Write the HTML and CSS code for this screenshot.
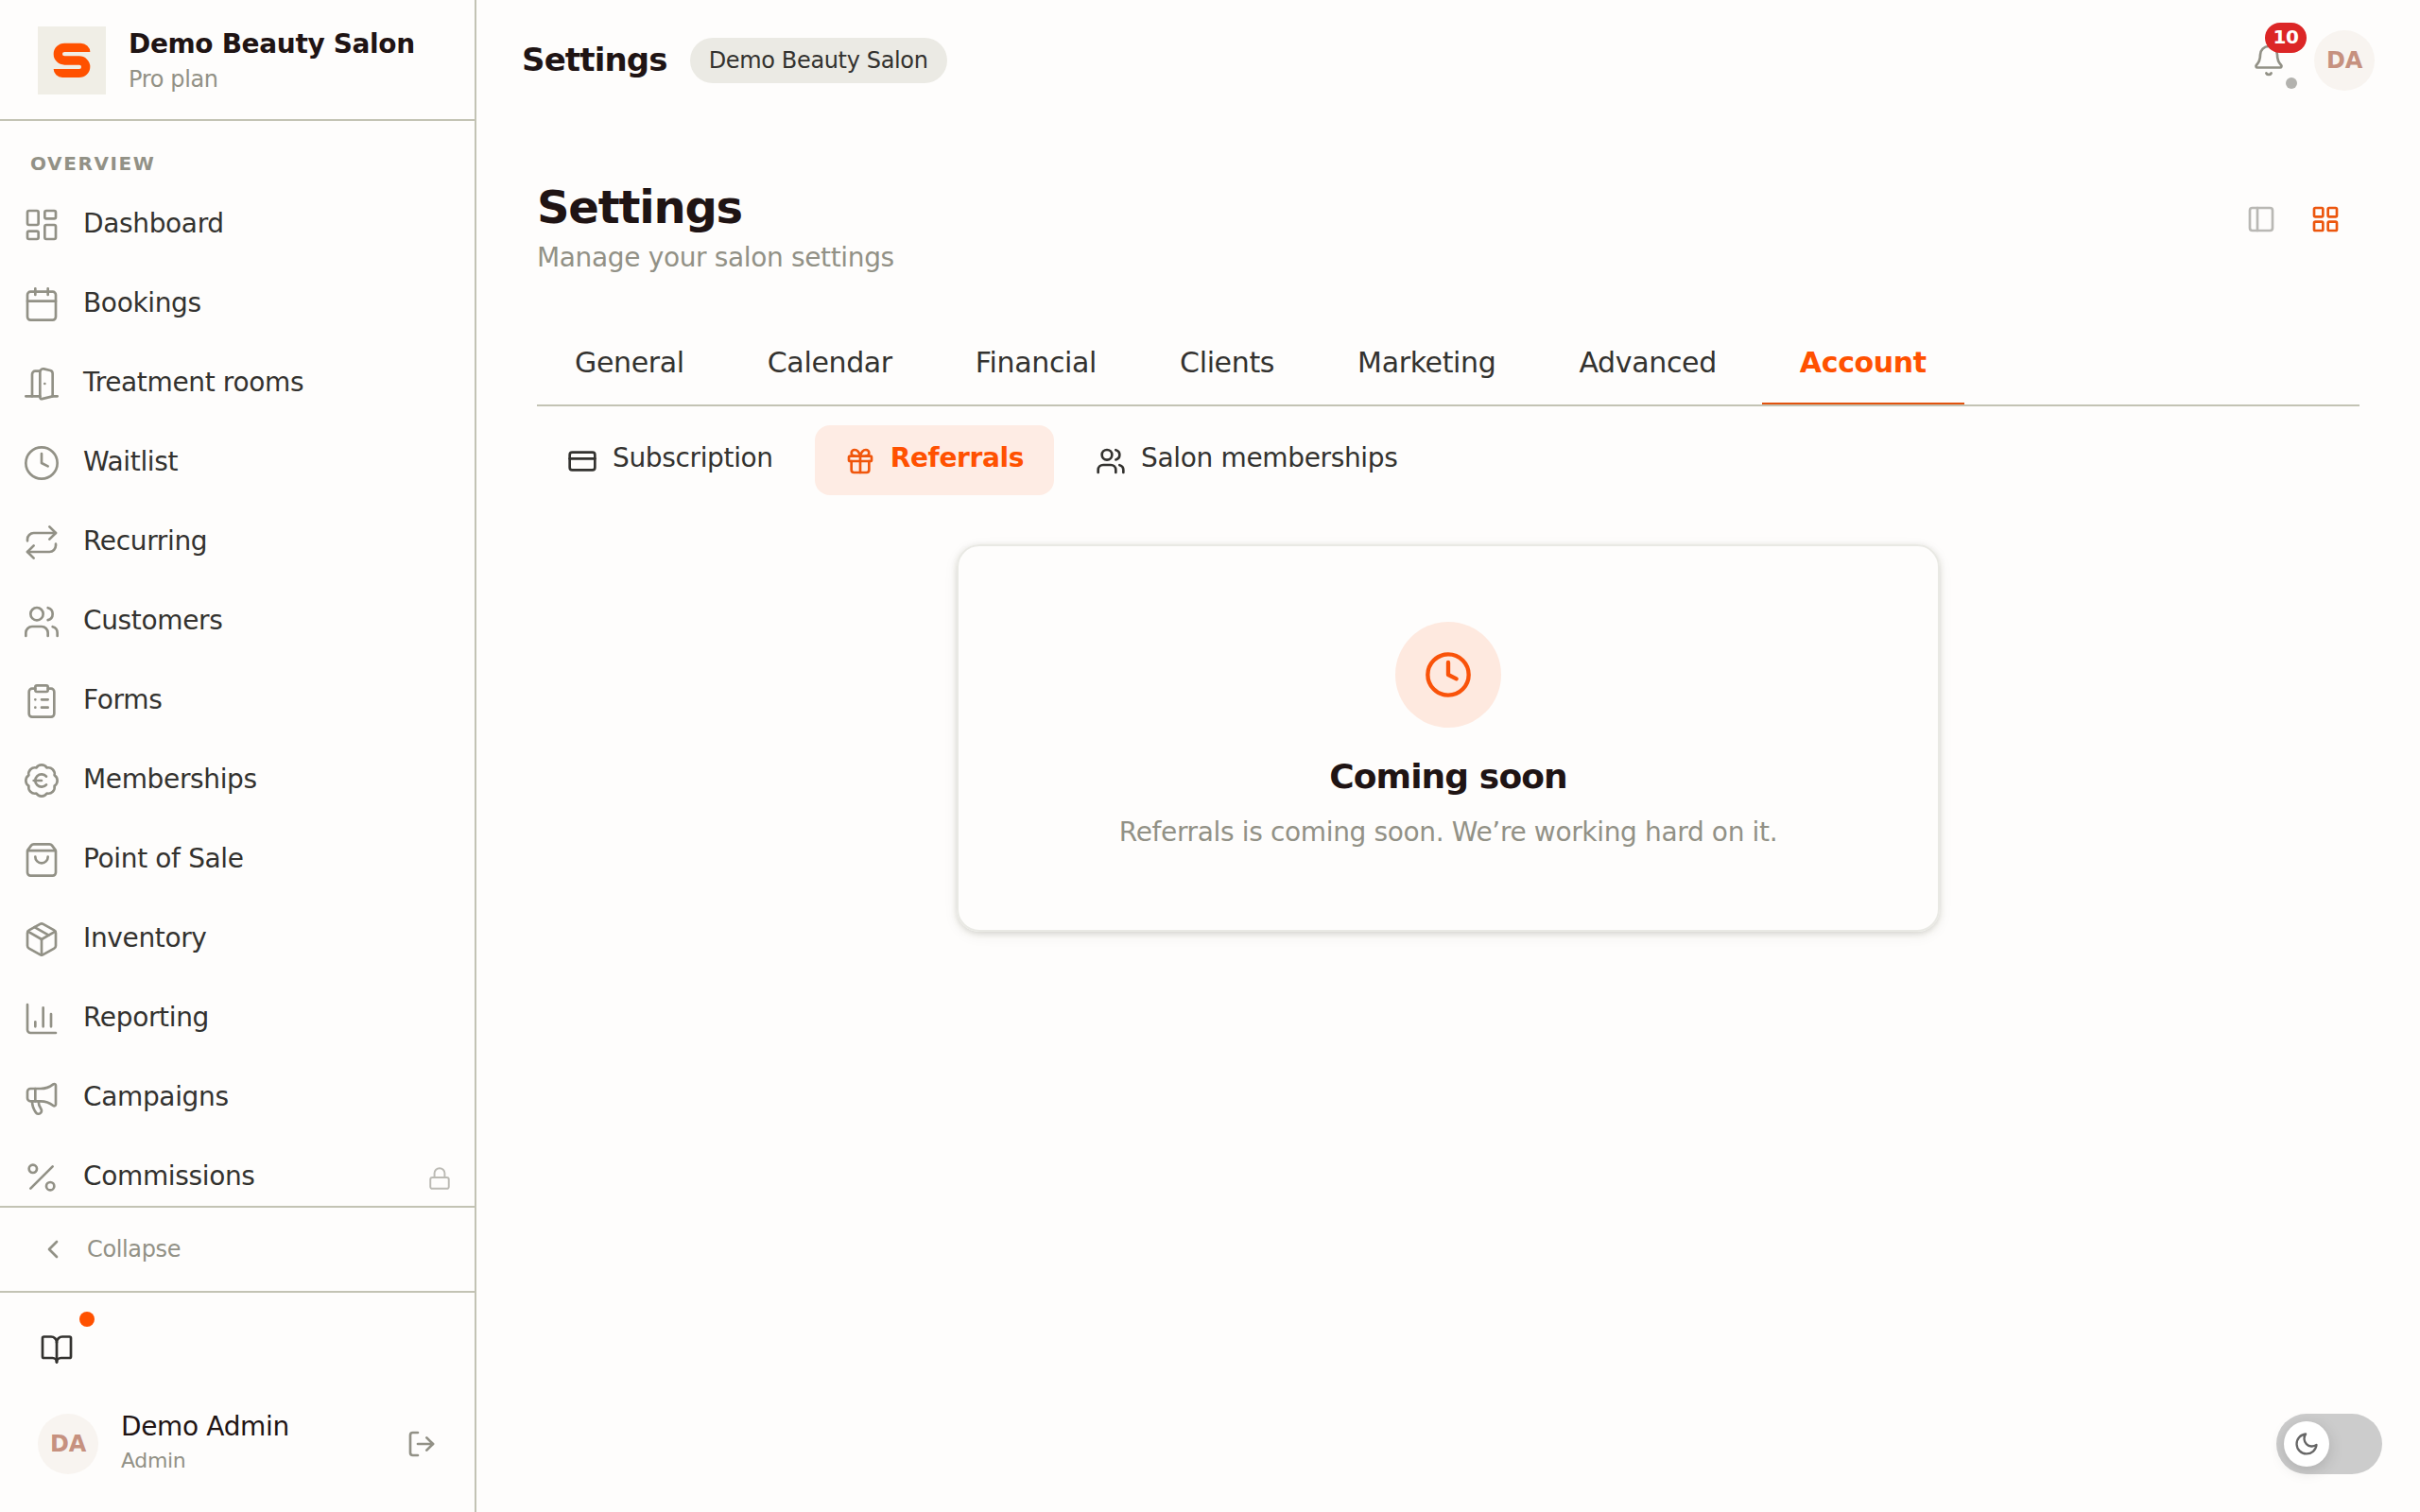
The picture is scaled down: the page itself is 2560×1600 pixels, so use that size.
FILE: index.html
```html
<!DOCTYPE html>
<html lang="en">
<head>
  <meta charset="UTF-8">
  <meta name="viewport" content="width=device-width, initial-scale=1.0">
  <title>Settings - Demo Beauty Salon</title>
  <link rel="stylesheet" href="styles.css">
</head>
<body>
  <aside class="sidebar">
    <div class="brand">
      <svg class="brand-logo" viewBox="0 0 216 216">
        <path d="M166 81A30 28 0 0 0 136 53H85A35 34.500 0 0 0 50 88A35 34 0 0 0 85 122H132Q138 122 138 128V129Q138 135 132 135H50A29 27 0 0 0 78 162H131A35 34 0 0 0 166 128A35 34 0 0 0 131 94H85Q78 94 78 88V87Q78 81 85 81Z"/>
      </svg>
      <div class="brand-text">
        <div class="brand-name">Demo Beauty Salon</div>
        <div class="brand-plan">Pro plan</div>
      </div>
    </div>

    <nav class="nav">
      <div class="nav-label">OVERVIEW</div>
      <a class="nav-item">
        <svg class="icon" viewBox="0 0 24 24"><rect x="3" y="3" width="7" height="9" rx="1"/><rect x="14" y="3" width="7" height="5" rx="1"/><rect x="14" y="12" width="7" height="9" rx="1"/><rect x="3" y="16" width="7" height="5" rx="1"/></svg>
        <span>Dashboard</span>
      </a>
      <a class="nav-item">
        <svg class="icon" viewBox="0 0 24 24"><path d="M8 2v4M16 2v4M3 10h18"/><rect x="3" y="4" width="18" height="18" rx="2"/></svg>
        <span>Bookings</span>
      </a>
      <a class="nav-item">
        <svg class="icon" viewBox="0 0 24 24"><path d="M11 20H2"/><path d="M11 4.562v16.157a1 1 0 0 0 1.242.97L19 20V5.562a2 2 0 0 0-1.515-1.940l-4-1A2 2 0 0 0 11 4.561z"/><path d="M11 4H8a2 2 0 0 0-2 2v14"/><path d="M14 12h.01"/><path d="M22 20h-3"/></svg>
        <span>Treatment rooms</span>
      </a>
      <a class="nav-item">
        <svg class="icon" viewBox="0 0 24 24"><circle cx="12" cy="12" r="10"/><path d="M12 6v6l4 2"/></svg>
        <span>Waitlist</span>
      </a>
      <a class="nav-item">
        <svg class="icon" viewBox="0 0 24 24"><path d="m17 2 4 4-4 4"/><path d="M3 11v-1a4 4 0 0 1 4-4h14"/><path d="m7 22-4-4 4-4"/><path d="M21 13v1a4 4 0 0 1-4 4H3"/></svg>
        <span>Recurring</span>
      </a>
      <a class="nav-item">
        <svg class="icon" viewBox="0 0 24 24"><path d="M16 21v-2a4 4 0 0 0-4-4H6a4 4 0 0 0-4 4v2"/><circle cx="9" cy="7" r="4"/><path d="M22 21v-2a4 4 0 0 0-3-3.870"/><path d="M16 3.130a4 4 0 0 1 0 7.750"/></svg>
        <span>Customers</span>
      </a>
      <a class="nav-item">
        <svg class="icon" viewBox="0 0 24 24"><rect x="8" y="2" width="8" height="4" rx="1"/><path d="M16 4h2a2 2 0 0 1 2 2v14a2 2 0 0 1-2 2H6a2 2 0 0 1-2-2V6a2 2 0 0 1 2-2h2"/><path d="M12 11h4M12 16h4M8 11h.01M8 16h.01"/></svg>
        <span>Forms</span>
      </a>
      <a class="nav-item">
        <svg class="icon" viewBox="0 0 24 24"><path d="M3.850 8.620a4 4 0 0 1 4.780-4.770 4 4 0 0 1 6.740 0 4 4 0 0 1 4.780 4.780 4 4 0 0 1 0 6.740 4 4 0 0 1-4.770 4.780 4 4 0 0 1-6.750 0 4 4 0 0 1-4.780-4.770 4 4 0 0 1 0-6.760Z"/><path d="M7 12h5"/><path d="M15 9.400a4 4 0 1 0 0 5.200"/></svg>
        <span>Memberships</span>
      </a>
      <a class="nav-item">
        <svg class="icon" viewBox="0 0 24 24"><path d="M16 10a4 4 0 0 1-8 0"/><path d="M3.103 6.034h17.794"/><path d="M3.400 5.467a2 2 0 0 0-.4 1.200V20a2 2 0 0 0 2 2h14a2 2 0 0 0 2-2V6.667a2 2 0 0 0-.4-1.200l-2-2.667A2 2 0 0 0 17 2H7a2 2 0 0 0-1.600.8z"/></svg>
        <span>Point of Sale</span>
      </a>
      <a class="nav-item">
        <svg class="icon" viewBox="0 0 24 24"><path d="M11 21.730a2 2 0 0 0 2 0l7-4A2 2 0 0 0 21 16V8a2 2 0 0 0-1-1.730l-7-4a2 2 0 0 0-2 0l-7 4A2 2 0 0 0 3 8v8a2 2 0 0 0 1 1.730z"/><path d="M12 22V12"/><path d="m3.300 7 8.700 5 8.700-5"/><path d="m7.500 4.270 9 5.150"/></svg>
        <span>Inventory</span>
      </a>
      <a class="nav-item">
        <svg class="icon" viewBox="0 0 24 24"><path d="M3 3v16a2 2 0 0 0 2 2h16"/><path d="M18 17V9M13 17V5M8 17v-3"/></svg>
        <span>Reporting</span>
      </a>
      <a class="nav-item">
        <svg class="icon" viewBox="0 0 24 24"><path d="M11 6a13 13 0 0 0 8.400-2.800A1 1 0 0 1 21 4v12a1 1 0 0 1-1.600.8A13 13 0 0 0 11 14H5a2 2 0 0 1-2-2V8a2 2 0 0 1 2-2z"/><path d="M6 14a12 12 0 0 0 2.400 7.200 2 2 0 0 0 3.200-2.400A8 8 0 0 1 10 14"/><path d="M8 6v8"/></svg>
        <span>Campaigns</span>
      </a>
      <a class="nav-item">
        <svg class="icon" viewBox="0 0 24 24"><path d="M19 5 5 19"/><circle cx="6.500" cy="6.500" r="2.500"/><circle cx="17.500" cy="17.500" r="2.500"/></svg>
        <span>Commissions</span>
        <svg class="icon lock" viewBox="0 0 24 24"><rect x="3" y="11" width="18" height="11" rx="2"/><path d="M7 11V7a5 5 0 0 1 10 0v4"/></svg>
      </a>
    </nav>

    <div class="collapse">
      <svg class="icon" viewBox="0 0 24 24"><path d="m15 18-6-6 6-6"/></svg>
      <span>Collapse</span>
    </div>

    <div class="account">
      <div class="guide">
        <svg class="icon" viewBox="0 0 24 24"><path d="M12 7v14"/><path d="M3 18a1 1 0 0 1-1-1V4a1 1 0 0 1 1-1h5a4 4 0 0 1 4 4 4 4 0 0 1 4-4h5a1 1 0 0 1 1 1v13a1 1 0 0 1-1 1h-6a3 3 0 0 0-3 3 3 3 0 0 0-3-3z"/></svg>
        <span class="guide-dot"></span>
      </div>
      <div class="user">
        <div class="avatar">DA</div>
        <div class="user-text">
          <div class="user-name">Demo Admin</div>
          <div class="user-role">Admin</div>
        </div>
        <svg class="icon logout" viewBox="0 0 24 24"><path d="M9 21H5a2 2 0 0 1-2-2V5a2 2 0 0 1 2-2h4"/><path d="m16 17 5-5-5-5"/><path d="M21 12H9"/></svg>
      </div>
    </div>
  </aside>

  <main class="main">
    <header class="topbar">
      <div class="topbar-title">Settings</div>
      <div class="salon-pill">Demo Beauty Salon</div>
      <div class="topbar-actions">
        <div class="bell">
          <svg class="icon" viewBox="0 0 24 24"><path d="M10.268 21a2 2 0 0 0 3.464 0"/><path d="M3.262 15.326A1 1 0 0 0 4 17h16a1 1 0 0 0 .740-1.673C19.410 13.956 18 12.499 18 8A6 6 0 0 0 6 8c0 4.499-1.411 5.956-2.738 7.326"/></svg>
          <span class="bell-count">10</span>
          <span class="bell-dot"></span>
        </div>
        <div class="avatar">DA</div>
      </div>
    </header>

    <section class="content">
      <div class="page-head">
        <div>
          <h1>Settings</h1>
          <p class="subtitle">Manage your salon settings</p>
        </div>
        <div class="view-switch">
          <button class="view-btn"><svg class="icon" viewBox="0 0 24 24"><rect x="3" y="3" width="18" height="18" rx="2"/><path d="M9 3v18"/></svg></button>
          <button class="view-btn active"><svg class="icon" viewBox="0 0 24 24"><rect x="3" y="3" width="7" height="7" rx="1"/><rect x="14" y="3" width="7" height="7" rx="1"/><rect x="14" y="14" width="7" height="7" rx="1"/><rect x="3" y="14" width="7" height="7" rx="1"/></svg></button>
        </div>
      </div>

      <div class="tabs">
        <a class="tab">General</a>
        <a class="tab">Calendar</a>
        <a class="tab">Financial</a>
        <a class="tab">Clients</a>
        <a class="tab">Marketing</a>
        <a class="tab">Advanced</a>
        <a class="tab active">Account</a>
      </div>

      <div class="subtabs">
        <a class="subtab">
          <svg class="icon" viewBox="0 0 24 24"><rect x="2" y="5" width="20" height="14" rx="2"/><path d="M2 10h20"/></svg>
          <span>Subscription</span>
        </a>
        <a class="subtab active">
          <svg class="icon" viewBox="0 0 24 24"><rect x="3" y="8" width="18" height="4" rx="1"/><path d="M12 8v13"/><path d="M19 12v7a2 2 0 0 1-2 2H7a2 2 0 0 1-2-2v-7"/><path d="M7.500 8a2.500 2.500 0 0 1 0-5A4.800 8 0 0 1 12 8a4.800 8 0 0 1 4.500-5 2.500 2.500 0 0 1 0 5"/></svg>
          <span>Referrals</span>
        </a>
        <a class="subtab">
          <svg class="icon" viewBox="0 0 24 24"><path d="M16 21v-2a4 4 0 0 0-4-4H6a4 4 0 0 0-4 4v2"/><circle cx="9" cy="7" r="4"/><path d="M22 21v-2a4 4 0 0 0-3-3.870"/><path d="M16 3.130a4 4 0 0 1 0 7.750"/></svg>
          <span>Salon memberships</span>
        </a>
      </div>

      <div class="empty-card">
        <div class="empty-icon">
          <svg class="icon" viewBox="0 0 24 24"><circle cx="12" cy="12" r="10"/><path d="M12 6v6l4 2"/></svg>
        </div>
        <h2>Coming soon</h2>
        <p>Referrals is coming soon. We’re working hard on it.</p>
      </div>
    </section>
  </main>

  <div class="theme-toggle">
    <div class="theme-knob">
      <svg class="icon" viewBox="0 0 24 24"><path d="M21 12.790A9 9 0 1 1 11.210 3 7 7 0 0 0 21 12.790z"/></svg>
    </div>
  </div>
</body>
</html>
```
FILE: styles.css
```css
* {
  box-sizing: border-box;
}
body {
  display: flex;
  height: 100vh;
  margin: 0;
  overflow: hidden;
  background-color: #fefdfc;
  color: #33322f;
  font-family: "DejaVu Sans", sans-serif;
  font-size: 28px;
  letter-spacing: -0.352px;
}
h1, h2, p {
  margin: 0;
}
.icon {
  flex-shrink: 0;
  fill: none;
  stroke: currentColor;
  stroke-width: 2;
  stroke-linecap: round;
  stroke-linejoin: round;
}
.avatar {
  display: flex;
  align-items: center;
  justify-content: center;
  width: 64px;
  height: 64px;
  border-radius: 50%;
  background-color: #f8f4f0;
  color: #c6917f;
  font-size: 24px;
  font-weight: bold;
}

/* Sidebar */
.sidebar {
  display: flex;
  flex-direction: column;
  flex-shrink: 0;
  width: 504px;
  border-right: 2px solid #c3c3b4;
}
.brand {
  display: flex;
  align-items: center;
  gap: 24px;
  height: 128px;
  padding: 2px 40px 0;
  border-bottom: 2px solid #c3c3b4;
}
.brand-logo {
  width: 72px;
  height: 72px;
  background-color: #f0eee6;
  fill: #ff5100;
}
.brand-name {
  color: #1f1414;
  font-weight: bold;
  line-height: 40px;
}
.brand-plan {
  color: #929186;
  font-size: 24px;
  line-height: 34px;
}
.nav {
  flex: 1;
  min-height: 0;
  padding-top: 24px;
  overflow: hidden;
}
.nav-label {
  height: 42px;
  padding-left: 32px;
  color: #929186;
  font-size: 20px;
  font-weight: bold;
  letter-spacing: 1.6px;
  line-height: 42px;
}
.nav-item {
  display: flex;
  align-items: center;
  gap: 24px;
  height: 84px;
  padding: 0 24px;
}
.nav-item .icon {
  width: 40px;
  height: 40px;
  margin-top: 4px;
  color: #929186;
  stroke-width: 1.6;
}
.nav-item .lock {
  width: 26px;
  height: 26px;
  margin-top: 6px;
  margin-left: auto;
  color: #bcbbb5;
  stroke-width: 1.8;
}
.collapse {
  display: flex;
  align-items: center;
  gap: 20px;
  height: 90px;
  padding: 0 40px;
  border-top: 2px solid #c3c3b4;
  color: #929186;
  font-size: 24px;
}
.collapse .icon {
  width: 32px;
  height: 32px;
}
.account {
  height: 234px;
  padding: 20px 40px 0;
  border-top: 2px solid #c3c3b4;
}
.guide {
  position: relative;
  width: 60px;
  height: 76px;
  padding: 22px 2px;
}
.guide .icon {
  display: block;
  width: 36px;
  height: 36px;
  stroke-width: 1.8;
}
.guide-dot {
  position: absolute;
  top: 0;
  right: 0;
  width: 16px;
  height: 16px;
  border-radius: 50%;
  background-color: #ff5100;
}
.user {
  display: flex;
  align-items: center;
  gap: 24px;
  height: 64px;
  margin-top: 32px;
}
.user-name {
  color: #1f1414;
  line-height: 36px;
}
.user-role {
  color: #929186;
  font-size: 22px;
  line-height: 36px;
}
.logout {
  width: 32px;
  height: 32px;
  margin-left: auto;
  color: #929186;
}

/* Top bar */
.main {
  flex: 1;
}
.topbar {
  display: flex;
  align-items: center;
  gap: 24px;
  height: 128px;
  padding: 0 48px;
}
.topbar-title {
  padding-bottom: 3px;
  color: #1f1414;
  font-size: 34px;
  font-weight: bold;
  letter-spacing: -0.025em;
}
.salon-pill {
  height: 48px;
  padding: 0 20px;
  border-radius: 24px;
  background-color: #ebeae4;
  font-size: 24px;
  line-height: 48px;
}
.topbar-actions {
  display: flex;
  gap: 16px;
  margin-left: auto;
}
.bell {
  position: relative;
  width: 64px;
  height: 64px;
  padding: 14px;
  color: #929186;
}
.bell .icon {
  display: block;
  width: 36px;
  height: 36px;
  stroke-width: 1.8;
}
.bell-count {
  position: absolute;
  top: -8px;
  right: -8px;
  width: 44px;
  height: 32px;
  border-radius: 16px;
  background-color: #dc2626;
  color: #fff;
  font-size: 20px;
  font-weight: bold;
  line-height: 30px;
  text-align: center;
}
.bell-dot {
  position: absolute;
  right: 2px;
  bottom: 2px;
  width: 12px;
  height: 12px;
  border-radius: 50%;
  background-color: #b3b2ae;
}

/* Settings page */
.content {
  padding: 60px 64px 0;
}
.page-head {
  display: flex;
  justify-content: space-between;
  height: 156px;
}
h1 {
  color: #1f1414;
  font-size: 48px;
  letter-spacing: -0.025em;
  line-height: 62px;
}
.subtitle {
  color: #929186;
  line-height: 46px;
}
.view-switch {
  display: flex;
  gap: 4px;
  padding: 12px 4px 0 0;
}
.view-btn {
  display: flex;
  align-items: center;
  justify-content: center;
  width: 64px;
  height: 64px;
  padding: 0;
  border: none;
  background: none;
  color: #b9b8b4;
}
.view-btn.active {
  color: #ec560d;
}
.view-btn .icon {
  width: 32px;
  height: 32px;
}
.tabs {
  display: flex;
  gap: 8px;
  height: 86px;
  border-bottom: 2px solid #c3c3b4;
}
.tab {
  padding: 0 40px;
  font-size: 30px;
  line-height: 80px;
}
.tab.active {
  border-bottom: 2px solid #e2530f;
  color: #ff5100;
  font-weight: bold;
}
.subtabs {
  display: flex;
  gap: 12px;
  margin-top: 20px;
}
.subtab {
  display: flex;
  align-items: center;
  gap: 16px;
  height: 74px;
  padding: 0 32px 5px;
  border-radius: 16px;
}
.subtab .icon {
  width: 32px;
  height: 32px;
  margin-top: 7px;
}
.subtab.active {
  background-color: #feece4;
  color: #ff5100;
  font-weight: bold;
}
.subtab.active .icon {
  color: #f0560c;
}
.empty-card {
  display: flex;
  flex-direction: column;
  align-items: center;
  width: 1040px;
  height: 410px;
  margin: 52px auto 0;
  padding: 80px;
  border: 2px solid #e9e9e4;
  border-radius: 24px;
  box-shadow: 0 2px 6px rgba(60, 60, 40, 0.18), 0 4px 16px rgba(60, 60, 40, 0.06);
}
.empty-icon {
  display: flex;
  align-items: center;
  justify-content: center;
  width: 112px;
  height: 112px;
  border-radius: 50%;
  background-color: #fee9df;
  color: #f9530a;
}
.empty-icon .icon {
  width: 52px;
  height: 52px;
}
h2 {
  margin: 25px 0 9px;
  color: #1f1414;
  font-size: 36px;
  letter-spacing: -0.025em;
  line-height: 54px;
}
.empty-card p {
  color: #929186;
  line-height: 46px;
}

/* Theme toggle floats over the page */
.theme-toggle {
  position: fixed;
  right: 40px;
  bottom: 40px;
  width: 112px;
  height: 64px;
  padding: 8px;
  border-radius: 32px;
  background-color: #ccc;
}
.theme-knob {
  display: flex;
  align-items: center;
  justify-content: center;
  width: 48px;
  height: 48px;
  border-radius: 50%;
  background-color: #fff;
  color: #666;
  box-shadow: 0 4px 16px rgba(0, 0, 0, 0.15);
}
.theme-knob .icon {
  width: 28px;
  height: 28px;
}
```
